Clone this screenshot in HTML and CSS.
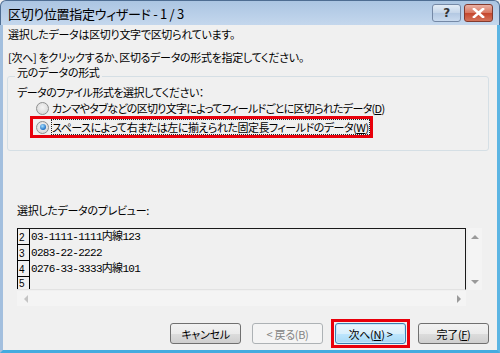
FILE: index.html
```html
<!DOCTYPE html>
<html lang="ja">

<head>
    <meta charset="UTF-8">
    <meta name="viewport" content="width=device-width, initial-scale=1.0">
    <title>区切り位置指定ウィザード</title>
    <link rel="stylesheet" href="styles.css">
</head>

<body>
    <div class="window">
        <header class="titlebar">
            <span class="title">区切り位置指定ウィザード - 1 / 3</span>
            <span class="tb-btn help">?</span>
            <span class="tb-btn close">
                <svg width="13" height="10" viewBox="0 0 13 10">
                    <path d="M2 1 L11 9 M11 1 L2 9" stroke="#fff" stroke-width="2.6" stroke-linecap="square" />
                </svg>
            </span>
        </header>

        <main class="client">
            <p class="line first">選択したデータは区切り文字で区切られています。</p>
            <p class="line second">[次へ] をクリックするか、区切るデータの形式を指定してください。</p>

            <section class="group">
                <span class="legend">元のデータの形式</span>
                <p class="line prompt">データのファイル形式を選択してください：</p>
                <div class="radio-row">
                    <span class="radio"></span>
                    <span class="radio-text">カンマやタブなどの区切り文字によってフィールドごとに区切られたデータ(<u>D</u>)</span>
                </div>
                <div class="radio-row selected">
                    <span class="radio checked"></span>
                    <span class="radio-text focus">スペースによって右または左に揃えられた固定長フィールドのデータ(<u>W</u>)</span>
                </div>
            </section>

            <p class="line preview-label">選択したデータのプレビュー:</p>

            <div class="preview">
                <div class="preview-box">
                    <div class="row"><span class="num">2</span><span class="data">03-1111-1111内線123</span></div>
                    <div class="row"><span class="num">3</span><span class="data">0283-22-2222</span></div>
                    <div class="row"><span class="num">4</span><span class="data">0276-33-3333内線101</span></div>
                    <div class="row last"><span class="num">5</span><span class="data"></span></div>
                </div>
                <div class="vscroll">
                    <span class="arrow up"></span>
                    <span class="arrow down"></span>
                </div>
                <div class="hscroll">
                    <span class="arrow left"></span>
                    <span class="arrow right"></span>
                </div>
            </div>

            <nav class="buttons">
                <span class="btn">キャンセル</span>
                <span class="btn disabled">&lt; 戻る(B)</span>
                <span class="mark"><span class="btn default">次へ(<u>N</u>) &gt;</span></span>
                <span class="btn finish">完了(<u>F</u>)</span>
            </nav>
        </main>
    </div>
</body>

</html>
```

FILE: styles.css
```css
html {
    box-sizing: border-box;
    font-family: "Noto Sans CJK JP", sans-serif;
    font-size: 11px;
}

*,
*:before,
*:after {
    box-sizing: inherit;
}

body {
    margin: 0;
    background: #fff;
}

p {
    margin: 0;
}

.window {
    width: 500px;
    height: 353px;
    display: flex;
    flex-direction: column;
    background: #f0f0f0;
    font-feature-settings: "palt";
    letter-spacing: -0.3px;
    color: #000;
}

/* title bar */
.titlebar {
    height: 25px;
    display: flex;
    align-items: center;
    padding: 0 6px 0 7px;
    background: linear-gradient(#abc5e2, #c4d7ed);
    border-top: 1px solid #4e6d92;
    border-left: 1px solid #4e6d92;
    border-right: 1px solid #4e6d92;
    border-radius: 6px 6px 0 0;
}

.title {
    font-size: 13px;
    line-height: 16px;
    letter-spacing: -0.3px;
    margin-top: 1px;
}

.tb-btn {
    height: 18px;
    display: flex;
    align-items: center;
    justify-content: center;
    border-radius: 3px;
}

.help {
    width: 29px;
    margin-left: auto;
    background: linear-gradient(#e3ecf6, #c4d5e9 50%, #b3c8e2 51%, #c9daee);
    border: 1px solid #7589a6;
    color: #333;
    font-family: "DejaVu Sans", sans-serif;
    font-size: 12px;
    font-weight: bold;
}

.close {
    width: 29px;
    margin-left: 3px;
    background: linear-gradient(#eab1a5, #d8765f 50%, #c5462d 51%, #d4735a);
    border: 1px solid #833a2e;
}

/* client area */
.client {
    flex-grow: 1;
    padding: 0 8px 0 5px;
    border-left: 3px solid #a3bfde;
    border-right: 3px solid #5cb5e3;
    border-bottom: 3px solid #45abdf;
}

.line {
    line-height: 16px;
    height: 16px;
    white-space: nowrap;
}

.first {
    margin-top: 1px;
}

.second {
    margin-top: 7px;
}

.group {
    margin: 11px 0 0 -1px;
    height: 75px;
    border: 1px solid #d5dfe5;
    border-radius: 3px;
    padding: 0 0 0 9px;
}

.legend {
    display: block;
    width: fit-content;
    margin: -13px 0 0 -2px;
    padding: 0 2px;
    line-height: 16px;
    background: #f0f0f0;
}

.prompt {
    margin-top: 4px;
    letter-spacing: -0.5px;
}

.radio-row {
    display: flex;
    align-items: center;
    height: 16px;
    margin-left: 19px;
    white-space: nowrap;
    letter-spacing: -0.7px;
}

.radio-row.selected {
    width: 343px;
    height: 22px;
    margin-left: 13px;
    padding-left: 3px;
    border: 3px solid #e8000b;
    letter-spacing: -0.5px;
}

.radio {
    width: 13px;
    height: 13px;
    margin-right: 3px;
    border: 1px solid #8e8f8f;
    border-radius: 50%;
    background: radial-gradient(circle at 50% 40%, #f4f4f4, #d2d2d2);
    display: flex;
    align-items: center;
    justify-content: center;
    flex-shrink: 0;
}

.radio.checked:after {
    content: "";
    width: 6px;
    height: 6px;
    border-radius: 50%;
    background: radial-gradient(circle at 40% 35%, #a6e0ff, #1e6fc4 70%, #0c4a8a);
}

.radio-text {
    line-height: 14px;
}

.focus {
    outline: 1px dotted #222;
    outline-offset: 0;
}

.preview-label {
    margin-top: 51px;
    margin-left: 9px;
}

/* preview control */
.preview {
    display: grid;
    grid-template-columns: 449px 14px;
    grid-template-rows: 62px 15px;
    column-gap: 2px;
    row-gap: 1px;
    margin: 10px 0 0 9px;
}

.preview-box {
    grid-column: 1;
    grid-row: 1;
    border-top: 1px solid #1a1a1a;
    border-right: 1px solid #1a1a1a;
    border-bottom: 1px solid #e2e2e2;
    background: #f0f0f0;
    overflow: hidden;
}

.row {
    display: flex;
    height: 16px;
}

.row.last {
    height: 12px;
}

.num {
    width: 13px;
    flex-shrink: 0;
    border-left: 1px solid #000;
    border-right: 1px solid #000;
    border-bottom: 1px solid #000;
    font-family: "Liberation Sans", sans-serif;
    font-size: 10px;
    letter-spacing: 0;
    line-height: 18px;
    padding-left: 1px;
    overflow: hidden;
}

.row.last .num {
    border-bottom: none;
    line-height: 14px;
}

.data {
    font-family: "Liberation Mono", "Noto Sans CJK JP", monospace;
    font-size: 11px;
    letter-spacing: -0.7px;
    line-height: 16px;
    padding-left: 1px;
    white-space: nowrap;
}

.vscroll {
    grid-column: 2;
    grid-row: 1 / 3;
    height: 62px;
    background: #f4f4f4;
    display: flex;
    flex-direction: column;
    justify-content: space-between;
    align-items: center;
    padding: 7px 0 6px;
}

.hscroll {
    grid-column: 1;
    grid-row: 2;
    background: #f4f4f4;
    display: flex;
    justify-content: space-between;
    align-items: center;
    padding: 0 5px 0 7px;
}

.arrow {
    width: 0;
    height: 0;
    border: 4px solid transparent;
}

.arrow.up {
    border-bottom: 4px solid #9a9a9a;
    border-top-width: 0;
}

.arrow.down {
    border-top: 4px solid #9a9a9a;
    border-bottom-width: 0;
}

.arrow.left {
    border-right: 4px solid #c4c4c4;
    border-left-width: 0;
}

.arrow.right {
    border-left: 4px solid #9a9a9a;
    border-right-width: 0;
}

/* dialog buttons */
.buttons {
    display: flex;
    align-items: center;
    justify-content: flex-end;
    margin-top: 13px;
}

.btn {
    width: 71px;
    height: 21px;
    display: flex;
    align-items: center;
    justify-content: center;
    border: 1px solid #707070;
    border-radius: 3px;
    background: linear-gradient(#f2f2f2, #ebebeb 50%, #dddddd 51%, #cfcfcf);
    white-space: nowrap;
}

.btn.disabled {
    margin-left: 11px;
    border-color: #adb2b5;
    background: #f4f4f4;
    color: #838383;
}

.mark {
    margin-left: 8px;
    border: 3px solid #e8000b;
    padding: 1px;
}

.btn.default {
    border-color: #3c7fb1;
    box-shadow: inset 0 0 0 1px #c8e9fb;
    background: linear-gradient(#eaf6fd, #d9f0fc 50%, #bee6fd 51%, #a7d9f5);
}

.btn.finish {
    margin-left: 8px;
}
```
